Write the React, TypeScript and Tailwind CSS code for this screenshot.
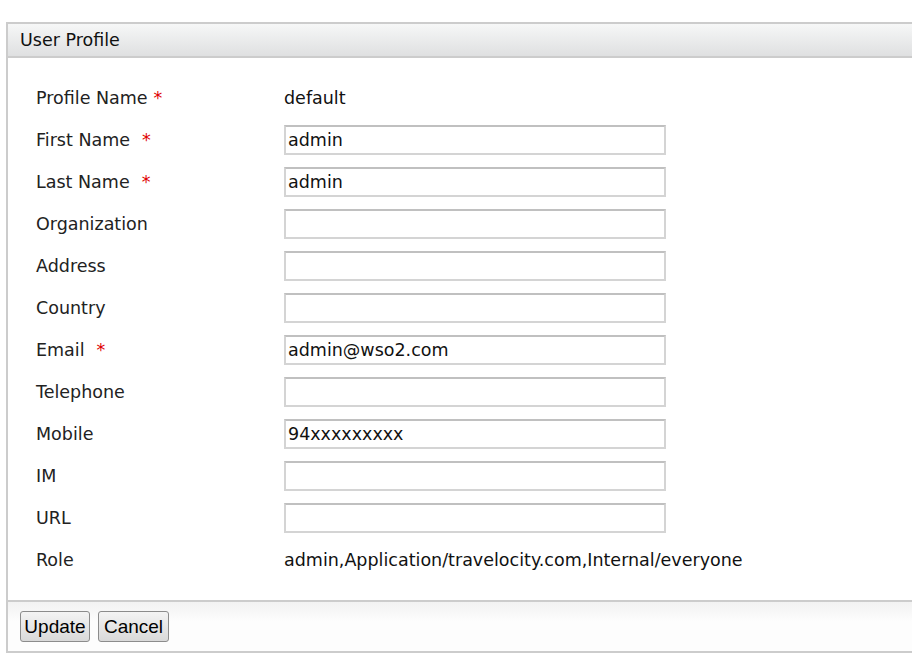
const rows: { label: string; req?: boolean; gap?: string; value?: string; input?: boolean }[] = [
  { label: "Profile Name", req: true, gap: "ml-[6px]", value: "default" },
  { label: "First Name", req: true, gap: "ml-[12px]", value: "admin", input: true },
  { label: "Last Name", req: true, gap: "ml-[12px]", value: "admin", input: true },
  { label: "Organization", value: "", input: true },
  { label: "Address", value: "", input: true },
  { label: "Country", value: "", input: true },
  { label: "Email", req: true, gap: "ml-[12px]", value: "admin@wso2.com", input: true },
  { label: "Telephone", value: "", input: true },
  { label: "Mobile", value: "94xxxxxxxxx", input: true },
  { label: "IM", value: "", input: true },
  { label: "URL", value: "", input: true },
  { label: "Role", value: "admin,Application/travelocity.com,Internal/everyone" },
]

const App = () => {
  return (
    <div className="w-[912px] h-[670px] bg-white overflow-hidden pt-[22px] pl-[6px] font-['DejaVu_Sans',sans-serif] text-[#222]">
      <div className="w-[920px] border-2 border-[#cccccc]">
        <div className="h-[34px] flex items-center pl-3 bg-gradient-to-b from-[#f6f7f7] to-[#dfe0e1] border-b-2 border-[#cccccc] text-[17.5px] text-[#111]">
          User Profile
        </div>
        <div className="pt-[19px] pb-[19px] pl-7">
          {rows.map((r) => (
            <div key={r.label} className="h-[42px] flex items-center text-[17.5px]">
              <div className="w-[248px] flex items-center">
                <span>{r.label}</span>
                {r.req && <span className={`${r.gap} text-[#e00000]`}>*</span>}
              </div>
              {r.input ? (
                <input
                  readOnly
                  value={r.value}
                  className="w-[382px] h-[30px] px-[2px] border-2 border-[#d4d4d4] border-t-[#c0c0c0] bg-white text-[17.5px] text-[#111] outline-none font-['DejaVu_Sans',sans-serif]"
                />
              ) : (
                <span className="text-[#111]">{r.value}</span>
              )}
            </div>
          ))}
        </div>
        <div className="h-[51px] border-t-2 border-[#cccccc] bg-gradient-to-b from-[#f2f2f2] to-[#fdfdfd] to-40% flex items-center gap-[8px] pl-3 font-['Liberation_Sans',Arial,sans-serif]">
          <button className="w-[70px] h-[31px] rounded-[3px] border border-[#8c8c8c] bg-gradient-to-b from-[#f4f4f4] to-[#d9d9d9] text-[19px] text-black leading-none">
            Update
          </button>
          <button className="w-[71px] h-[31px] rounded-[3px] border border-[#8c8c8c] bg-gradient-to-b from-[#f4f4f4] to-[#d9d9d9] text-[19px] text-black leading-none">
            Cancel
          </button>
        </div>
      </div>
    </div>
  )
}

export default App
